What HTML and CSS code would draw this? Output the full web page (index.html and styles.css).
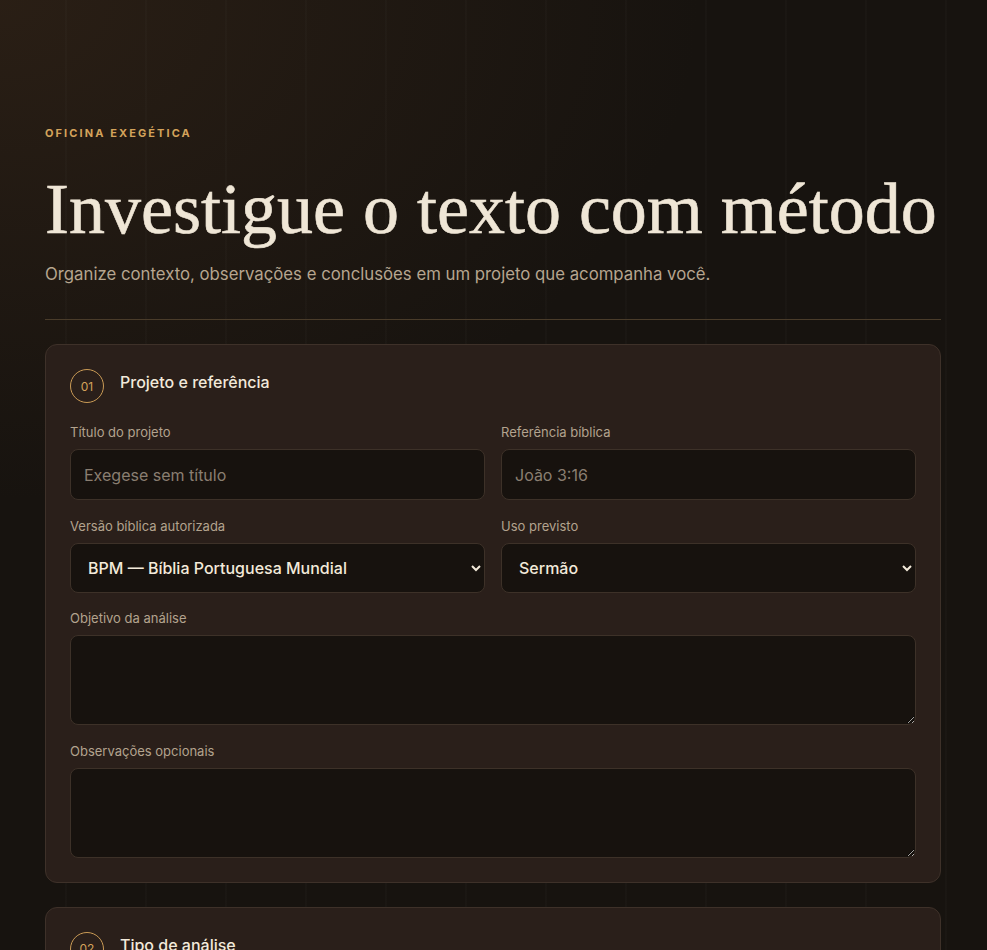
FILE: index.html
```html
<!DOCTYPE html>
<html lang="pt-BR">
<head>
<meta charset="utf-8">
<title>Oficina Exegética</title>
<link rel="stylesheet" href="styles.css">
</head>
<body>
<main class="page">
  <header class="hero">
    <p class="eyebrow">OFICINA EXEGÉTICA</p>
    <h1 class="title">Investigue o texto com método</h1>
    <p class="lead">Organize contexto, observações e conclusões em um projeto que acompanha você.</p>
  </header>

  <section class="card">
    <div class="card-head">
      <span class="step">01</span>
      <h2 class="card-title">Projeto e referência</h2>
    </div>
    <div class="grid">
      <label class="field">
        <span class="label">Título do projeto</span>
        <input class="control" type="text" placeholder="Exegese sem título">
      </label>
      <label class="field">
        <span class="label">Referência bíblica</span>
        <input class="control" type="text" placeholder="João 3:16">
      </label>
      <label class="field">
        <span class="label">Versão bíblica autorizada</span>
        <select class="control select">
          <option>BPM — Bíblia Portuguesa Mundial</option>
        </select>
      </label>
      <label class="field">
        <span class="label">Uso previsto</span>
        <select class="control select">
          <option>Sermão</option>
        </select>
      </label>
      <label class="field wide">
        <span class="label">Objetivo da análise</span>
        <textarea class="control area"></textarea>
      </label>
      <label class="field wide">
        <span class="label">Observações opcionais</span>
        <textarea class="control area"></textarea>
      </label>
    </div>
  </section>

  <section class="card">
    <div class="card-head">
      <span class="step">02</span>
      <h2 class="card-title">Tipo de análise</h2>
    </div>
    <div class="grid">
      <label class="field">
        <span class="label">Abordagem</span>
        <input class="control" type="text">
      </label>
    </div>
  </section>
</main>
</body>
</html>
```

FILE: styles.css
```css
* { box-sizing: border-box; }

html {
  background: #16120e;
}

body {
  margin: 0;
  min-height: 100vh;
  color-scheme: dark;
  font-family: Inter, "Noto Sans", sans-serif;
  color: #efe6d6;
  background:
    repeating-linear-gradient(90deg, transparent 0, transparent 65px, rgba(255,255,255,0.014) 65px, rgba(255,255,255,0.014) 67px, transparent 67px, transparent 80px),
    radial-gradient(ellipse 700px 500px at 0 0, rgba(70,48,30,0.4), rgba(70,48,30,0) 100%),
    #17130f;
}

.page {
  width: 896px;
  max-width: calc(100% - 48px);
  margin: 0 auto;
  padding: 126px 0 40px;
  position: relative;
  left: -0.5px;
}

.hero {
  border-bottom: 1px solid #4a3c2a;
  padding-bottom: 33px;
  margin-bottom: 24px;
}

.eyebrow {
  margin: 0;
  font-size: 11px;
  line-height: 14px;
  font-weight: 700;
  letter-spacing: 0.19em;
  color: #d4a35b;
}

.title {
  margin: 27px 0 0;
  font-family: "Liberation Serif", "DejaVu Serif", serif;
  font-weight: 400;
  font-size: 72px;
  line-height: 84px;
  color: #efe6d6;
  white-space: nowrap;
  -webkit-text-stroke: 0.6px #efe6d6;
}

.lead {
  margin: 11px 0 0;
  font-size: 16.75px;
  line-height: 24px;
  color: #b6a58f;
}

.card {
  background: #2a1f1a;
  border: 1px solid #3e3129;
  border-radius: 12px;
  padding: 24px 24px 24px;
  margin-bottom: 24px;
}

.card-head {
  display: flex;
  align-items: center;
  gap: 16px;
  margin-bottom: 21px;
}

.step {
  width: 34px;
  height: 34px;
  border-radius: 50%;
  border: 1px solid #c99a55;
  display: flex;
  align-items: center;
  justify-content: center;
  font-size: 12px;
  color: #d4a35b;
  flex: none;
}

.card-title {
  margin: -8px 0 0;
  font-size: 16px;
  font-weight: 500;
  line-height: 24px;
  color: #f2e9da;
}

.grid {
  display: grid;
  grid-template-columns: 1fr 1fr;
  column-gap: 16px;
  row-gap: 17.6px;
}

.field {
  display: flex;
  flex-direction: column;
  gap: 9px;
}

.field.wide {
  grid-column: 1 / -1;
}

.label {
  font-size: 13px;
  line-height: 16px;
  color: #b3a38e;
}

.control {
  width: 100%;
  height: 51px;
  background: #17120e;
  border: 1px solid #3d3128;
  border-radius: 8px;
  padding: 0 13px;
  font-family: Inter, "Noto Sans", sans-serif;
  font-size: 16px;
  color: #f3eada;
  outline: none;
}

.control::placeholder {
  color: #8a7e71;
}

.select {
  height: 50px;
  padding: 0 12px 0 13px;
  font-weight: 500;
  color-scheme: dark;
}

.area {
  height: 90px;
  padding: 12px 13px;
  resize: vertical;
  display: block;
}
```
